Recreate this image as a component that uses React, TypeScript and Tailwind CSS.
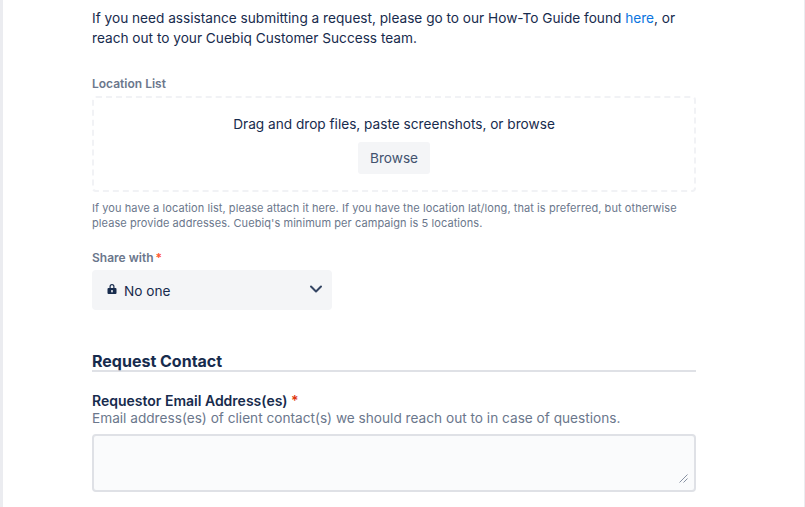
export default function App() {
  return (
    <div className="h-[507px] overflow-hidden bg-[#ebecf0] font-['Inter',sans-serif] text-[#172b4d]">
      <div className="ml-[3px] mr-px h-full bg-white pl-[89px] pr-[108px] pt-2">
        <p className="text-[13.65px] leading-5">
          If you need assistance submitting a request, please go to our How-To Guide found{' '}
          <a className="text-[#0b75e0]">here</a>, or reach out to your Cuebiq Customer Success team.
        </p>

        {/* Location list */}
        <label className="mt-7 block text-xs font-semibold leading-4 text-[#6b778c]">Location List</label>
        <div className="mt-1 flex h-24 flex-col items-center rounded border-2 border-dashed border-[#f1f2f5] pt-4">
          <div className="text-[13.65px] leading-5">Drag and drop files, paste screenshots, or browse</div>
          <button className="mt-2 h-8 w-[72px] rounded-[3px] bg-[#f4f5f7] text-[13.65px] text-[#42526e]">Browse</button>
        </div>
        <p className="mt-[9px] text-[11px] leading-[15px] tracking-[0.07px] text-[#6b778c]">
          If you have a location list, please attach it here. If you have the location lat/long, that is preferred, but otherwise please provide addresses. Cuebiq's minimum per campaign is 5 locations.
        </p>

        {/* Share with */}
        <label className="mt-[19px] block text-xs font-semibold leading-4 text-[#6b778c]">
          Share with<span className="ml-0.5 text-[#ff5630]">*</span>
        </label>
        <div className="mt-1 flex h-10 w-60 items-center rounded bg-[#f4f5f7] pl-[15px] pr-[9px]">
          <svg width="10" height="12" viewBox="0 0 10 12" className="-mt-0.5 shrink-0" fill="#172b4d">
            <path fillRule="evenodd" d="M2.5 5V3.5a2.5 2.5 0 0 1 5 0V5H8.5A1 1 0 0 1 9.500 6v4a1 1 0 0 1-1 1h-7a1 1 0 0 1-1-1V6a1 1 0 0 1 1-1h1ZM3.700 5h2.600V3.500a1.300 1.300 0 0 0-2.600 0V5ZM5 7a1 1 0 0 0-.5 1.870V9.500h1V8.870A1 1 0 0 0 5 7Z" />
          </svg>
          <span className="ml-[7px] mt-0.5 flex-1 text-[13.65px]">No one</span>
          <svg width="14" height="10" viewBox="0 0 14 10" fill="none" stroke="#344563" strokeWidth="2" strokeLinecap="round" strokeLinejoin="round" className="-mt-0.5 shrink-0">
            <path d="M2 2.500 7 7.500 12 2.500" />
          </svg>
        </div>

        {/* Request contact */}
        <h2 className="mt-[42px] border-b-2 border-[#dfe1e6] text-base font-bold leading-[18px]">Request Contact</h2>
        <label className="mt-5 block text-sm font-semibold leading-[18px]">
          Requestor Email Address(es) <span className="text-[#de350b]">*</span>
        </label>
        <p className="-mt-px text-[13.65px] leading-[18px] text-[#6b778c]">Email address(es) of client contact(s) we should reach out to in case of questions.</p>
        <div className="relative mt-[7px]">
          <textarea className="block h-[58px] w-full resize-none rounded border-2 border-[#dfe1e6] bg-[#fafbfc]" />
          <svg width="9" height="9" viewBox="0 0 9 9" fill="none" stroke="#6b778c" strokeWidth="0.8" className="absolute bottom-[9px] right-[8px]">
            <path d="M0.500 8.500 8.500 0.500M4.500 8.500 8.500 4.500" />
          </svg>
        </div>
      </div>
    </div>
  )
}
